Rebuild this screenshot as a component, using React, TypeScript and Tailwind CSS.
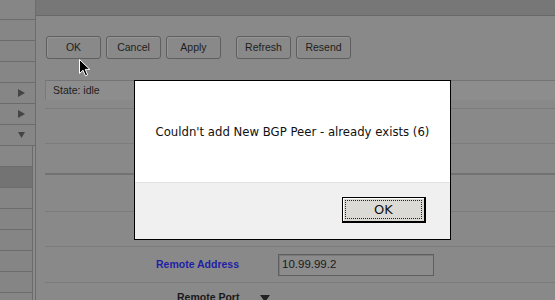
import { ReactNode } from 'react';

const ui = { fontFamily: '"DejaVu Sans", sans-serif' };
const lib = { fontFamily: '"Liberation Sans", Arial, sans-serif' };

function ToolButton({ children, className = '' }: { children: ReactNode; className?: string }) {
  return (
    <div
      className={`flex h-[23px] w-[55px] items-center justify-center rounded-[3px] border border-[#5f5f5f] bg-[#898989] text-[10.5px] text-[#1e1e1e] shadow-[inset_1px_1px_0_#959595] ${className}`}
      style={lib}
    >
      {children}
    </div>
  );
}

function Sidebar() {
  const rows = [0, 1, 2, 3, 4, 5];
  return (
    <div className="flex w-[36px] shrink-0 flex-col border-r border-[#6c6c6c] bg-[#868686]">
      <div className="h-[20px] shrink-0 border-b border-[#6c6c6c]" />
      {rows.map((i) => (
        <div key={i} className="flex h-[21px] shrink-0 items-center justify-end border-b border-[#6c6c6c] pr-[10px]">
          {i === 3 || i === 4 ? (
            <svg width="7" height="8" viewBox="0 0 7 8"><path d="M0 0L7 4L0 8Z" fill="#454545" /></svg>
          ) : i === 5 ? (
            <svg width="7" height="6" viewBox="0 0 7 6"><path d="M0 0H7L3.5 6Z" fill="#454545" /></svg>
          ) : null}
        </div>
      ))}
      <div className="flex flex-1">
        <div className="flex flex-1 flex-col border-r border-[#6a6a6a]">
          <div className="h-[21px] shrink-0 border-b border-[#6c6c6c] bg-[#878787]" />
          <div className="h-[21px] shrink-0 border-b border-[#6c6c6c] bg-[#737373]" />
          {[0, 1, 2, 3, 4].map((i) => (
            <div key={i} className="h-[21px] shrink-0 border-b border-[#6c6c6c] bg-[#858585]" />
          ))}
        </div>
        <div className="w-[2px] bg-[#8c8c8c]" />
      </div>
    </div>
  );
}

function Cursor() {
  return (
    <svg className="absolute left-[79px] top-[59px]" width="12" height="18" viewBox="0 0 12 18">
      <path d="M0.5 0.5V14.5L4 11.2L6.4 16.8L8.6 15.9L6.3 10.4H10.8Z" fill="#000" stroke="#fff" strokeWidth="1" />
    </svg>
  );
}

function Dialog() {
  return (
    <div className="absolute left-[134px] top-[80px] flex h-[160px] w-[317px] flex-col border border-black bg-white" style={ui}>
      <div className="flex h-[101px] items-center justify-center pt-[2px] text-[11.7px] text-[#111]">
        Couldn&apos;t add New BGP Peer - already exists (6)
      </div>
      <div className="flex flex-1 items-start justify-end border-t border-[#e2e2e2] bg-[#f0f0f0] pr-[24px] pt-[14px]">
        <div className="h-[26px] w-[84px] border border-black border-b-2 border-r-2 bg-[#dcdad5] p-[1px] shadow-[inset_1px_1px_0_#fff]">
          <div className="m-[1px] flex h-[19px] items-center justify-center border border-dotted border-[#222] text-[13px] text-[#111]">
            OK
          </div>
        </div>
      </div>
    </div>
  );
}

export default function App() {
  return (
    <div className="relative flex h-[300px] w-[555px] overflow-hidden bg-[#888]" style={ui}>
      <Sidebar />
      <div className="flex-1 bg-[#898989]">
        <div className="h-[16px] border-b border-[#686868] bg-[#777]" />
        <div className="flex h-[64px] items-start gap-[5px] pl-[10px] pt-[20px]">
          <ToolButton>OK</ToolButton>
          <ToolButton>Cancel</ToolButton>
          <ToolButton>Apply</ToolButton>
          <ToolButton className="ml-[10px]">Refresh</ToolButton>
          <ToolButton>Resend</ToolButton>
        </div>
        <div className="pl-[9px]">
          <div className="flex h-[20px] border-t border-[#747474] bg-[#8d8d8d]">
            <div className="flex w-[100px] items-center border-l border-[#7a7a7a] pl-[7px] text-[10.5px] text-[#1e1e1e]" style={lib}>
              State: idle
            </div>
          </div>
          <div className="h-[9px] border-b border-[#7c7c7c]" />
          <div className="h-[35px] border-b border-[#7c7c7c]" />
          <div className="h-[31px] border-b-2 border-[#727272]" />
          <div className="h-[37px] border-b border-[#7c7c7c]" />
          <div className="h-[35px] border-b border-[#7c7c7c]" />
          <div className="flex h-[36px] items-center border-b border-[#7c7c7c]">
            <div className="w-[233px] pl-[111px] text-[10.5px] font-bold text-[#1f1fa6]" style={lib}>
              Remote Address
            </div>
            <div className="flex h-[22px] w-[156px] items-center border border-[#5f5f5f] bg-[#8c8c8c] pl-[3px] text-[11.5px] text-[#1a1a1a] shadow-[inset_1px_1px_0_#7a7a7a]" style={lib}>
              10.99.99.2
            </div>
          </div>
          <div className="flex h-[20px] items-end">
            <div className="w-[215px] pl-[132px] text-[10.5px] font-bold leading-[12px] text-[#1a1a1a]" style={lib}>
              Remote Port
            </div>
            <svg className="mb-[1px]" width="10" height="7" viewBox="0 0 10 7"><path d="M0 0H10L5 7Z" fill="#222" /></svg>
          </div>
        </div>
      </div>
      <Dialog />
      <Cursor />
    </div>
  );
}
